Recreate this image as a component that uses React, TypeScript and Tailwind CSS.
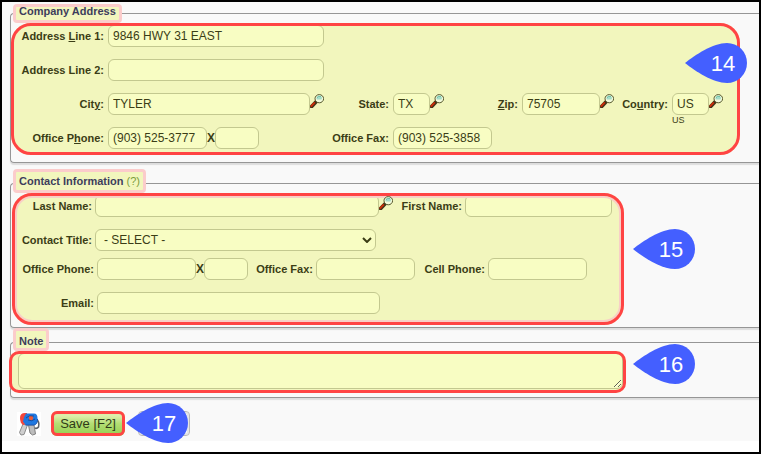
import type { ComponentProps, ReactNode } from 'react'
import { clsx } from 'clsx'

const labelClass =
  'shrink-0 whitespace-nowrap text-right text-[11px] font-bold leading-4'

function Field({ className, ...props }: ComponentProps<'input'>) {
  return (
    <input
      type="text"
      className={clsx(
        'h-[22px] shrink-0 rounded-md border border-[#c3c88f] bg-[#f8fdc3] pl-1 text-xs outline-none',
        className
      )}
      {...props}
    />
  )
}

function Label({ className, ...props }: ComponentProps<'label'>) {
  return <label className={clsx(labelClass, className)} {...props} />
}

function SearchButton({ label }: { label: string }) {
  return (
    <button type="button" aria-label={label} className="mt-px shrink-0 self-start">
      <svg width="14" height="14" viewBox="0 0 14 14" className="block">
        <path d="M1.6 12.6 5.6 8.4" stroke="#43331a" strokeWidth="3.6" strokeLinecap="square" />
        <path d="M.8 12.6 4.8 8.4" stroke="#cf2d08" strokeWidth="1.8" />
        <ellipse cx="9.3" cy="4.7" rx="4.3" ry="4.1" fill="#f4fbdc" stroke="#55572c" />
        <path d="M6.3 4.5a3 3 0 0 1 5.8-.8l-.6 1.8H7Z" fill="#a5dcc8" />
        <path d="M7 3.8a3 2.6 0 0 1 4-1.3" stroke="#6cc0a8" fill="none" />
      </svg>
    </button>
  )
}

function Section({
  title,
  className,
  legendClass,
  markClass,
  children,
}: {
  title: ReactNode
  className: string
  legendClass: string
  markClass: string
  children: ReactNode
}) {
  return (
    <fieldset
      className={clsx(
        'min-w-0 rounded-l border border-r-0 border-[#969696] shadow-[0_2px_1px_#dddddd]',
        className
      )}
    >
      <legend
        className={clsx(
          'relative ml-1.5 flex px-0.5 text-[11px] font-bold leading-4 text-[#3d3d5c]',
          legendClass
        )}
      >
        <span
          className={clsx(
            'absolute -left-1 -right-1 bottom-0 rounded border-[3px] border-[#fbcccb] bg-[#f2f6bd]',
            markClass
          )}
        />
        <span className="relative">{title}</span>
      </legend>
      {children}
    </fieldset>
  )
}

function Callout({ value, className }: { value: number; className: string }) {
  return (
    <div className={clsx('absolute h-10 w-[62px]', className)}>
      <svg viewBox="0 0 62 40" className="absolute inset-0 h-full w-full">
        <path
          d="M0 20C10 12 28 0 42 0a20 20 0 0 1 0 40C28 40 10 28 0 20Z"
          fill="#445fff"
        />
      </svg>
      <span className="relative flex h-full items-center justify-center pl-3.5 text-[22px] text-white">
        {value}
      </span>
    </div>
  )
}

function KeysIcon() {
  return (
    <svg width="24" height="24" viewBox="0 0 24 24" className="shrink-0 bg-white">
      <path d="M19 7q4 3 2.5 8-1.5 2-4 1" fill="none" stroke="#5d6168" strokeWidth="1.6" />
      <path d="M6 12 2.5 20.5 4 23l3-.5L10.5 13Z" fill="#cfcfcf" stroke="#8c8c8c" />
      <path d="M11.5 13l1.5 8 2.5 2 3-1-1.5-9Z" fill="#bdbdbd" stroke="#808080" />
      <path d="M8 1Q3 1 3 6q0 5 3 7l4-1V1Z" fill="#f4473c" />
      <path d="M9 1.5h8q3.5 0 3.5 5 0 6-3.5 6.5H8.5L6 9.5Q6.5 5 9 1.5Z" fill="#1f78e0" />
      <path d="M8.5 13H17q3.5-.5 3.5-6" fill="none" stroke="#1a56b4" />
      <circle cx="14" cy="6" r="2.2" fill="#ef5b35" />
      <path d="M9 6q3-3.500 8-2M11 8q4 2 7-1" fill="none" stroke="#17408c" strokeWidth=".8" />
    </svg>
  )
}

export default function App() {
  return (
    <div className="min-h-screen overflow-hidden border-2 border-black bg-white font-['Liberation_Sans',Arial,sans-serif] text-[#3b3d16]">
      <form className="bg-[#f9f9f9] pb-[5px] pl-2 pt-px">
        <Section
          title="Company Address"
          className="pb-[7px]"
          legendClass="h-5 items-start"
          markClass="h-[19px]"
        >
          <div className="relative w-fit rounded-[20px] bg-[#f2f6bd] pb-1.5 pl-[3px] pr-[17px] pt-0.5 after:pointer-events-none after:absolute after:inset-0 after:rounded-[20px] after:border-[3px] after:border-[#ff4444]">
            <div className="grid grid-cols-[90px_216px_61px_51px_70px_92px_50px_51px] items-center gap-x-1 gap-y-3">
              <Label htmlFor="address1">
                Address <u>L</u>ine 1:
              </Label>
              <Field id="address1" defaultValue="9846 HWY 31 EAST" className="col-span-7 w-[216px]" />

              <Label htmlFor="address2">Address Line 2:</Label>
              <Field id="address2" className="col-span-7 w-[216px]" />

              <Label htmlFor="city">
                Cit<u>y</u>:
              </Label>
              <div className="flex">
                <Field id="city" defaultValue="TYLER" className="w-[202px]" />
                <SearchButton label="Find city" />
              </div>
              <Label htmlFor="state">State:</Label>
              <div className="flex">
                <Field id="state" defaultValue="TX" className="w-[37px]" />
                <SearchButton label="Find state" />
              </div>
              <Label htmlFor="zip">
                <u>Z</u>ip:
              </Label>
              <div className="flex">
                <Field id="zip" defaultValue="75705" className="w-[78px]" />
                <SearchButton label="Find zip" />
              </div>
              <Label htmlFor="country">
                Co<u>u</u>ntry:
              </Label>
              <div className="relative flex">
                <Field id="country" defaultValue="US" className="w-[37px]" />
                <SearchButton label="Find country" />
                <span className="absolute left-0 top-full text-[9px] leading-[10px]">US</span>
              </div>

              <Label htmlFor="phone">
                Office P<u>h</u>one:
              </Label>
              <div className="flex items-center">
                <Field id="phone" defaultValue="(903) 525-3777" className="w-[99px]" />
                <label htmlFor="ext" className="w-2 text-center text-xs font-bold">
                  X
                </label>
                <Field id="ext" className="w-11" />
              </div>
              <Label htmlFor="fax">Office Fax:</Label>
              <Field id="fax" defaultValue="(903) 525-3858" className="col-span-5 w-[99px]" />
            </div>
            <Callout value={14} className="-right-[7px] top-5 z-10" />
          </div>
        </Section>

        <Section
          title={
            <>
              Contact Information{' '}
              <a href="#help" className="font-normal text-[#7b9c3c]">
                (?)
              </a>
            </>
          }
          className="mt-2.5 pb-0.5"
          legendClass="h-5 items-start"
          markClass="h-6"
        >
          <div className="relative ml-px w-fit rounded-[20px] bg-[#f2f6bd] pb-[11px] pr-3 pt-0.5 after:pointer-events-none after:absolute after:inset-0 after:rounded-[20px] after:border-[3px] after:border-[#ff4444] after:shadow-[inset_0_0_0_2px_#f8cfc6]">
            <div className="flex items-center">
              <Label htmlFor="lastName" className="mr-[3px] w-20">
                Last Name:
              </Label>
              <Field id="lastName" className="w-[284px]" />
              <div className="relative z-10 flex self-start">
                <SearchButton label="Find contact" />
              </div>
              <Label htmlFor="firstName" className="mr-[3px] w-[69px]">
                First Name:
              </Label>
              <Field id="firstName" className="w-[147px]" />
            </div>
            <div className="mt-3 flex items-center">
              <Label htmlFor="title" className="mr-[3px] w-20">
                Contact Title:
              </Label>
              <div className="relative">
                <select
                  id="title"
                  className="block h-[22px] w-[281px] appearance-none rounded-md border border-[#c3c88f] bg-[#f8fdc3] pl-2 text-xs outline-none"
                >
                  <option>- SELECT -</option>
                </select>
                <svg
                  viewBox="0 0 10 6"
                  className="pointer-events-none absolute right-1 top-2 h-1.5 w-2.5"
                >
                  <path d="m1 1 4 4 4-4" fill="none" stroke="currentColor" strokeWidth="2" />
                </svg>
              </div>
            </div>
            <div className="mt-[7px] flex items-center">
              <Label htmlFor="contactPhone" className="mr-[3px] w-[82px]">
                Office Phone:
              </Label>
              <Field id="contactPhone" className="w-[99px]" />
              <label htmlFor="contactExt" className="w-2 text-center text-xs font-bold">
                X
              </label>
              <Field id="contactExt" className="w-11" />
              <Label htmlFor="contactFax" className="mr-[3px] w-[65px]">
                Office Fax:
              </Label>
              <Field id="contactFax" className="w-[99px]" />
              <Label htmlFor="cell" className="mr-[3px] w-[70px]">
                Cell Phone:
              </Label>
              <Field id="cell" className="w-[99px]" />
            </div>
            <div className="mt-3 flex items-center">
              <Label htmlFor="email" className="mr-[3px] w-[82px]">
                Email:
              </Label>
              <Field id="email" type="email" className="w-[283px]" />
            </div>
            <Callout value={15} className="left-full top-9 ml-[9px]" />
          </div>
        </Section>

        <Section
          title="Note"
          className="mt-[5px] pb-1"
          legendClass="h-[18px] items-start"
          markClass="h-[23px]"
        >
          <div className="relative -ml-0.5 w-fit rounded-[10px] bg-[#f2f6bd] pb-1 pl-[9px] pr-[3px] pt-0.5 after:pointer-events-none after:absolute after:inset-0 after:rounded-[10px] after:border-[3px] after:border-[#ff4444]">
            <textarea
              aria-label="Note"
              className="block h-9 w-[605px] rounded-md border border-[#c3c88f] bg-[#f8fdc3] px-1 text-xs outline-none"
            />
            <Callout value={16} className="-top-[7px] left-full ml-[7px]" />
          </div>
        </Section>

        <div className="mt-[13px] flex items-center pl-[7px]">
          <KeysIcon />
          <div className="relative ml-2.5 rounded-md after:pointer-events-none after:absolute after:inset-0 after:rounded-md after:border-[3px] after:border-[#ff4444]">
            <button
              type="button"
              className="block h-[25px] w-[74px] whitespace-nowrap rounded-md bg-linear-to-b from-[#dcefaa] from-20% via-[#b4de74] via-50% to-[#92cf4d] text-[13px] text-[#2f3a18]"
            >
              Save [F2]
            </button>
            <Callout value={17} className="-top-2 left-full z-10 ml-px" />
          </div>
          <button
            type="button"
            aria-label="Cancel"
            className="ml-[13px] h-[25px] w-[52px] rounded border border-[#b9b9b9] bg-white shadow-[inset_0_0_0_2px_#e6e6e6]"
          />
        </div>
      </form>
    </div>
  )
}
